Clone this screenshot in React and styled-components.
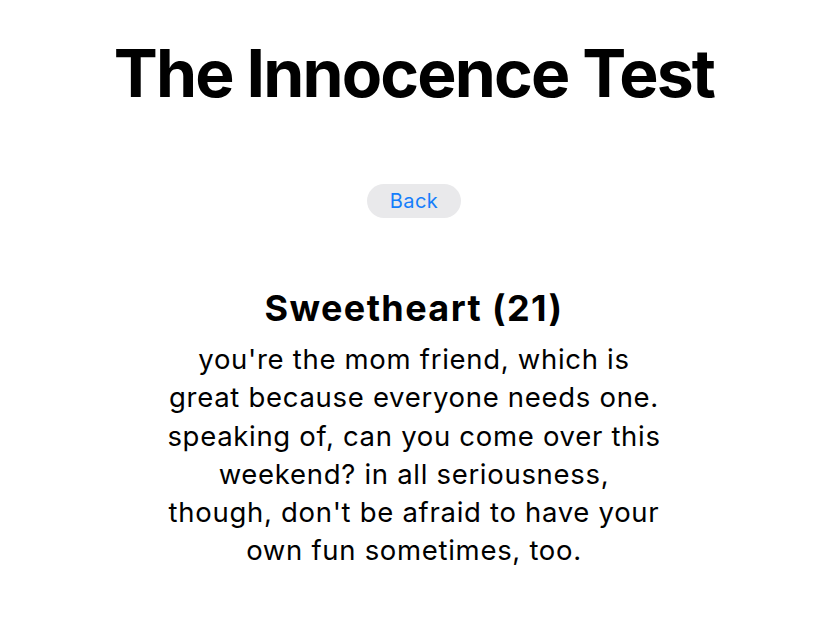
import React from 'react';
import styled, { createGlobalStyle } from 'styled-components';

const GlobalStyle = createGlobalStyle`
  html, body {
    margin: 0;
    padding: 0;
    background: #ffffff;
  }
  body {
    font-family: Inter, "Noto Sans", sans-serif;
    color: #000000;
  }
`;

const Page = styled.main`
  display: flex;
  flex-direction: column;
  align-items: center;
  padding-top: 33px;
`;

const Title = styled.h1`
  margin: 0;
  font-size: 66px;
  font-weight: 700;
  letter-spacing: -1.85px;
  line-height: 80px;
`;

const BackButton = styled.button`
  margin-top: 71px;
  width: 94px;
  height: 34px;
  border: none;
  border-radius: 17px;
  background: #e9e9eb;
  color: #157efb;
  font-family: Inter, "Noto Sans", sans-serif;
  font-size: 20px;
  letter-spacing: 0.4px;
  cursor: pointer;
`;

const Result = styled.section`
  margin-top: 68px;
  display: flex;
  flex-direction: column;
  align-items: center;
  width: 500px;
  text-align: center;
`;

const ResultName = styled.h2`
  margin: 0;
  font-size: 36px;
  font-weight: 700;
  letter-spacing: 1.4px;
  line-height: 44px;
`;

const Description = styled.p`
  margin: 10px 0 0;
  font-size: 27.5px;
  letter-spacing: 0.7px;
  line-height: 38.3px;
`;

const App = () => {
  return (
    <>
      <GlobalStyle />
      <Page>
        <Title>The Innocence Test</Title>
        <BackButton>Back</BackButton>
        <Result>
          <ResultName>Sweetheart (21)</ResultName>
          <Description>
            you're the mom friend, which is great because everyone needs one.
            speaking of, can you come over this weekend? in all seriousness,
            though, don't be afraid to have your own fun sometimes, too.
          </Description>
        </Result>
      </Page>
    </>
  );
};

export default App;
